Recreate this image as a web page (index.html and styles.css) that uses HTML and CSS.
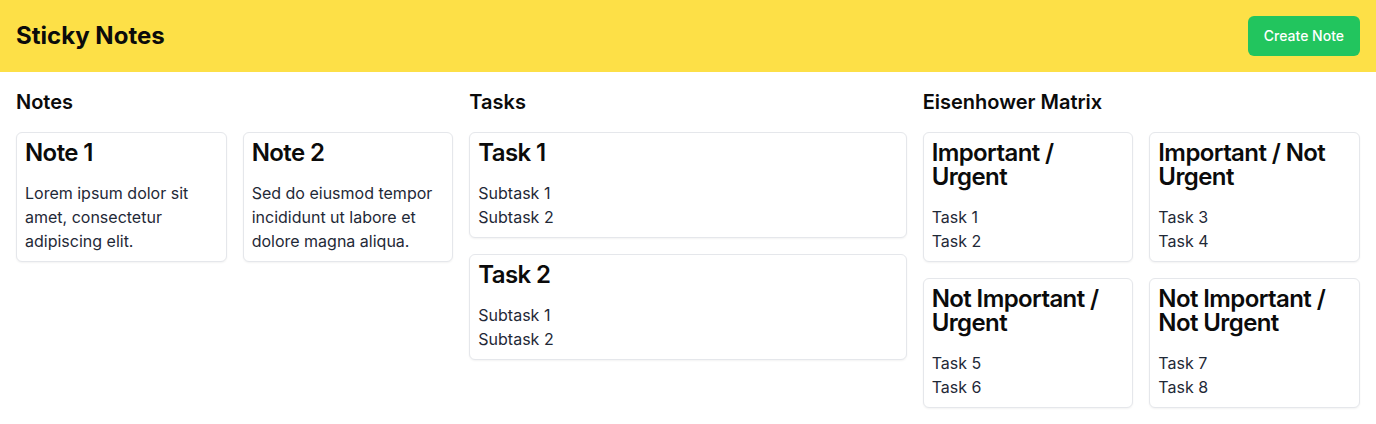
FILE: index.html
```html
<!DOCTYPE html>
<html lang="en">
<head>
<meta charset="utf-8">
<title>Sticky Notes</title>
<link rel="stylesheet" href="styles.css">
</head>
<body>
<header class="topbar">
  <h1 class="brand">Sticky Notes</h1>
  <button class="btn-create">Create Note</button>
</header>
<main class="board">
  <section class="column">
    <h2 class="column-title">Notes</h2>
    <div class="grid-2">
      <div class="card">
        <h3 class="card-title">Note 1</h3>
        <p class="card-body">Lorem ipsum dolor sit amet, consectetur adipiscing elit.</p>
      </div>
      <div class="card">
        <h3 class="card-title">Note 2</h3>
        <p class="card-body">Sed do eiusmod tempor incididunt ut labore et dolore magna aliqua.</p>
      </div>
    </div>
  </section>
  <section class="column">
    <h2 class="column-title">Tasks</h2>
    <div class="stack">
      <div class="card">
        <h3 class="card-title">Task 1</h3>
        <ul class="card-list">
          <li>Subtask 1</li>
          <li>Subtask 2</li>
        </ul>
      </div>
      <div class="card">
        <h3 class="card-title">Task 2</h3>
        <ul class="card-list">
          <li>Subtask 1</li>
          <li>Subtask 2</li>
        </ul>
      </div>
    </div>
  </section>
  <section class="column">
    <h2 class="column-title">Eisenhower Matrix</h2>
    <div class="grid-2">
      <div class="card">
        <h3 class="card-title">Important / Urgent</h3>
        <ul class="card-list"><li>Task 1</li><li>Task 2</li></ul>
      </div>
      <div class="card">
        <h3 class="card-title">Important / Not Urgent</h3>
        <ul class="card-list"><li>Task 3</li><li>Task 4</li></ul>
      </div>
      <div class="card">
        <h3 class="card-title">Not Important / Urgent</h3>
        <ul class="card-list"><li>Task 5</li><li>Task 6</li></ul>
      </div>
      <div class="card">
        <h3 class="card-title">Not Important / Not Urgent</h3>
        <ul class="card-list"><li>Task 7</li><li>Task 8</li></ul>
      </div>
    </div>
  </section>
</main>
</body>
</html>
```

FILE: styles.css
```css
* { box-sizing: border-box; }
html, body { margin: 0; padding: 0; }
body {
  font-family: Inter, "Noto Sans", sans-serif;
  color: #111827;
  background: #ffffff;
  font-size: 16px;
  line-height: 24px;
}
.topbar {
  background: #fde047;
  display: flex;
  align-items: center;
  justify-content: space-between;
  padding: 16px;
}
.brand {
  margin: 0;
  font-size: 24px;
  line-height: 32px;
  font-weight: 700;
  color: #0b0b0b;
}
.btn-create {
  font-family: Inter, "Noto Sans", sans-serif;
  background: #22c55e;
  color: #ffffff;
  border: none;
  border-radius: 6px;
  padding: 8px 16px;
  font-size: 14px;
  line-height: 24px;
  font-weight: 500;
  cursor: pointer;
}
.board {
  display: grid;
  grid-template-columns: repeat(3, 1fr);
  gap: 16px;
  padding: 16px;
  align-items: start;
}
.column-title {
  margin: 0 0 16px;
  font-size: 20px;
  line-height: 28px;
  font-weight: 600;
  color: #0b0b0b;
}
.grid-2 {
  display: grid;
  grid-template-columns: 1fr 1fr;
  gap: 16px;
}
.stack {
  display: flex;
  flex-direction: column;
  gap: 16px;
}
.card {
  background: #fff;
  border: 1px solid #e5e7eb;
  border-radius: 6px;
  box-shadow: 0 1px 2px rgba(0,0,0,0.05);
  padding: 8px;
}
.card-title {
  margin: 0 0 16px;
  font-size: 24px;
  line-height: 24px;
  font-weight: 600;
  letter-spacing: -0.025em;
  color: #0b0b0b;
}
.card-body {
  margin: 0;
  color: #1f2937;
}
.card-list {
  margin: 0;
  padding: 0;
  list-style: none;
  color: #1f2937;
}
```
